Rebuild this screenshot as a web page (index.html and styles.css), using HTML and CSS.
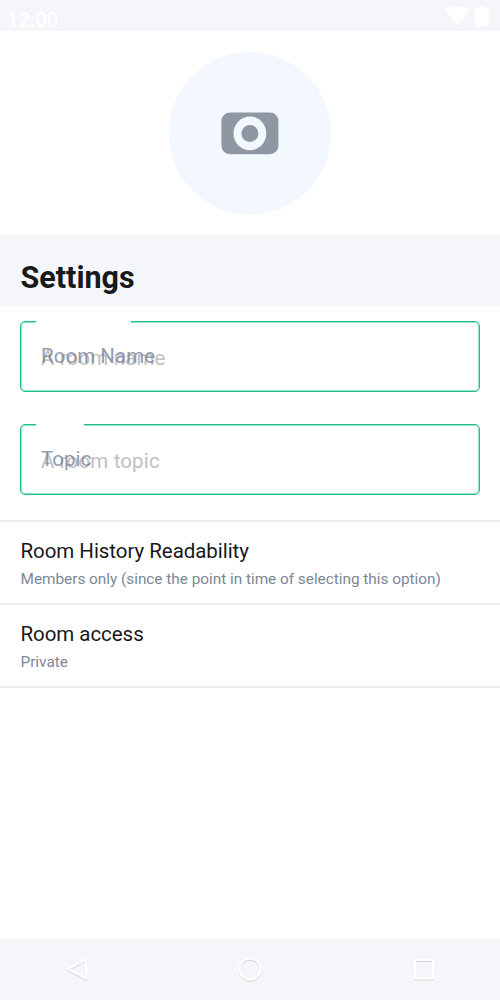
FILE: index.html
```html
<!DOCTYPE html>
<html lang="en">
<head>
<meta charset="utf-8">
<title>Room settings</title>
<link rel="stylesheet" href="styles.css">
</head>
<body>
<div class="screen">
  <header class="status-bar">
    <span class="clock">12:00</span>
    <svg class="status-icons" width="46" height="22" viewBox="0 0 46 22"><path d="M1.2 4.2Q13.3-1.6 25.3 4.2Q24.5 7.5 13.3 20Q2 7.5 1.2 4.2Z"/><path d="M31.4 3H35.6V1.2H41.7V3H44.7V21.3H31.4V3Z"/></svg>
  </header>
  <section class="avatar-area">
    <svg width="164" height="164" viewBox="0 0 164 164"><circle cx="82" cy="81.3" r="81.3" fill="#f2f8fd"/><rect x="53.4" y="60.5" width="57" height="41.7" rx="8.5" fill="#8f97a3"/><ellipse cx="81.9" cy="81.4" rx="16.4" ry="16.9" fill="#f2f8fd"/><circle cx="81.9" cy="81.4" r="8.5" fill="#8f97a3"/></svg>
  </section>
  <h1 class="section-title">Settings</h1>
  <form class="fields">
    <div class="field">
      <span class="notch notch-name"></span>
      <span class="placeholder">A room name</span>
      <label class="label">Room Name</label>
    </div>
    <div class="field">
      <span class="notch notch-topic"></span>
      <span class="placeholder">A room topic</span>
      <label class="label">Topic</label>
    </div>
  </form>
  <main class="options">
    <div class="option">
      <div class="option-title">Room History Readability</div>
      <div class="option-value">Members only (since the point in time of selecting this option)</div>
    </div>
    <div class="option">
      <div class="option-title">Room access</div>
      <div class="option-value">Private</div>
    </div>
  </main>
  <nav class="nav-bar">
    <svg width="30" height="30" viewBox="0 0 30 30"><path d="M24.8 5.5V24.5L7 15Z"/></svg>
    <svg width="30" height="30" viewBox="0 0 30 30"><circle cx="15" cy="15" r="10.5"/></svg>
    <svg width="30" height="30" viewBox="0 0 30 30"><path d="M6 6H24V24.3H6Z"/></svg>
  </nav>
</div>
</body>
</html>
```
FILE: styles.css
```css
body {
  margin: 0;
  background: #fff;
  font-family: Roboto, sans-serif;
}
.screen {
  width: 500px;
  height: 1000px;
  display: flex;
  flex-direction: column;
  overflow: hidden;
}
.status-bar {
  box-sizing: border-box;
  height: 31px;
  padding: 5px 10px 0 7px;
  display: flex;
  justify-content: space-between;
  background: #f4f6fa;
}
.clock {
  margin-top: 3px;
  font-size: 20.2px;
  line-height: 24px;
  font-weight: 500;
  color: #fff;
}
.status-icons {
  fill: #fff;
}
.avatar-area {
  box-sizing: border-box;
  height: 204px;
  padding-top: 21px;
  display: flex;
  justify-content: center;
}
.section-title {
  box-sizing: border-box;
  height: 71px;
  margin: 0;
  padding: 25px 20.5px 0;
  background: #f4f6fa;
  color: #17191c;
  font-size: 30.5px;
  line-height: 36px;
  font-weight: 700;
}
.fields {
  box-sizing: border-box;
  height: 214px;
  padding: 15px 20px 0;
  display: flex;
  flex-direction: column;
  gap: 32px;
}
.field {
  box-sizing: border-box;
  position: relative;
  height: 71px;
  padding: 24px 20px 0;
  border: 1px solid #1ec08b;
  border-radius: 5px;
  box-shadow: inset 0 0 0 1px rgba(30, 192, 139, .45);
}
.placeholder {
  display: block;
  font-size: 20.5px;
  line-height: 24px;
  letter-spacing: .14px;
  color: #bfbfbf;
}
.label {
  position: absolute;
  left: 20px;
  top: 22px;
  font-size: 20.5px;
  line-height: 24px;
  letter-spacing: .05px;
  color: rgba(116, 128, 150, .8);
}
.notch {
  position: absolute;
  left: 15px;
  top: -2px;
  height: 4px;
  background: #fff;
}
.notch-name {
  width: 95px;
}
.notch-topic {
  width: 48px;
}
.options {
  flex: 1;
}
.option {
  box-sizing: border-box;
  height: 83px;
  padding: 16px 20.5px 0;
  border-top: 2px solid #e9edf3;
}
.option:last-child {
  height: 85px;
  border-bottom: 2px solid #e9edf3;
}
.option-title {
  font-size: 20.5px;
  line-height: 26px;
  letter-spacing: -.05px;
  color: #17191c;
}
.option-value {
  margin-top: 5px;
  font-size: 15.36px;
  line-height: 20px;
  letter-spacing: -.02px;
  color: #7b8797;
}
.nav-bar {
  box-sizing: border-box;
  height: 61px;
  display: flex;
  align-items: center;
  justify-content: space-between;
  padding: 0 61px 2px;
  background: #f4f6fa;
}
.nav-bar svg {
  fill: none;
  stroke: #fff;
  stroke-width: 2.2;
  stroke-linejoin: round;
  filter: drop-shadow(0 1px .3px rgba(0, 0, 0, .14));
}
```
